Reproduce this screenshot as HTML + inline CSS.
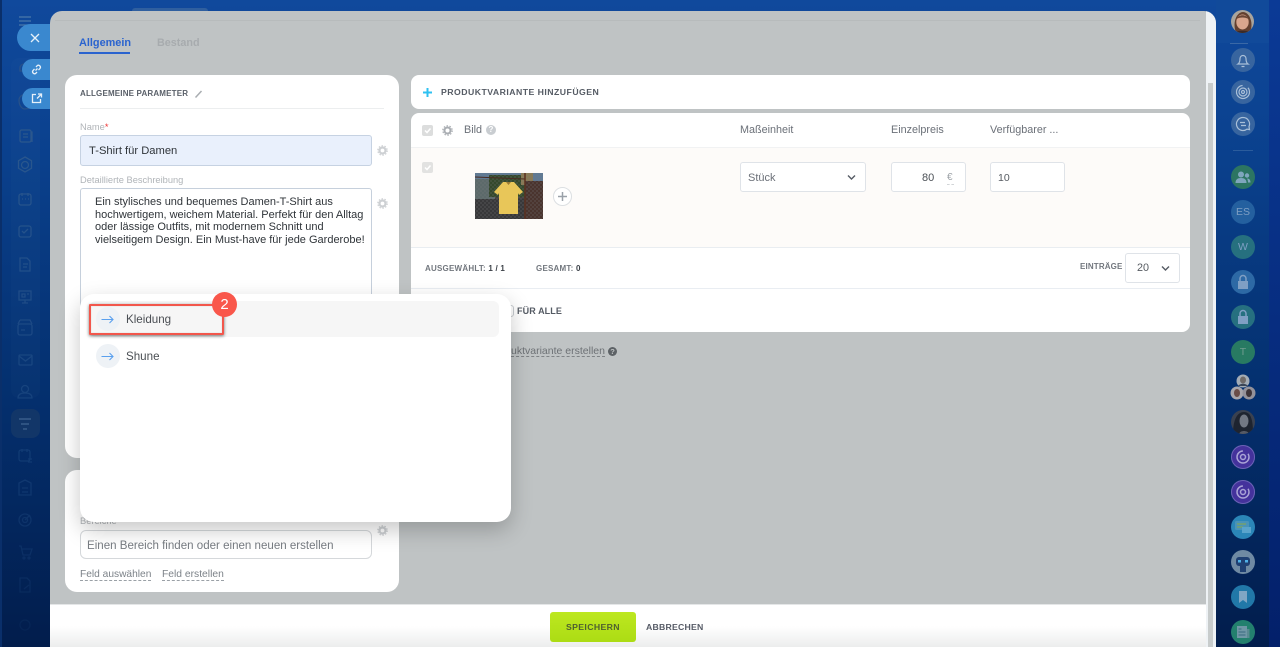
<!DOCTYPE html>
<html><head><meta charset="utf-8"><style>
*{box-sizing:border-box}
html,body{margin:0;padding:0;width:1280px;height:647px;overflow:hidden;background:#0a3a85;font-family:"Liberation Sans",sans-serif}
.a{position:absolute}
.t{position:absolute;white-space:nowrap;line-height:1}
.card{position:absolute;background:#fff}
.av{position:absolute;left:1231px;width:24px;height:24px;border-radius:50%;color:#7f9fc4;font-size:10.500px;text-align:center;line-height:24px;overflow:hidden}
.av svg{position:absolute;left:0;top:0}
.inp{position:absolute;background:#fff;border:1px solid #dfe3e8;border-radius:3px}
.dash{border-bottom:1px dashed #9aa0a6}
</style></head><body>
<div class="a" style="left:0;top:0;width:1280px;height:647px;background:linear-gradient(180deg,#10499c 0,#0b4290 20%,#04306f 60%,#021d4c 100%)"></div>
<div class="a" style="left:1269px;top:0;width:11px;height:647px;background:linear-gradient(180deg,#0b3a96,#03206a)"></div>
<div class="a" style="left:1216px;top:0;width:53px;height:43px;background:#114a9a"></div>
<div class="a" style="left:0;top:0;width:2px;height:647px;background:#0a2f6a"></div>
<div class="a" style="left:11px;top:58px;width:29px;height:340px;background:rgba(255,255,255,.015);border-radius:8px"></div>
<div class="a" style="left:11px;top:409px;width:29px;height:29px;background:#123668;border-radius:8px"></div>
<svg class="a" style="left:0;top:0;-webkit-mask-image:linear-gradient(#000 0,#000 22%,rgba(0,0,0,.45) 60%,rgba(0,0,0,.2) 90%,rgba(0,0,0,.08) 100%)" width="50" height="647" fill="none" stroke="#2b578d" stroke-width="1.300">
<path d="M19 17h12M19 21h12M19 25h12" stroke="#4a78aa"/>
<path d="M20 68a4 4 0 1 1 8 0v3h-8zM19 100c0 6 3 9 6 9l6-1v-7a6 6 0 0 0-12-1z" stroke="#28528a"/>
<rect x="20" y="130" width="11" height="12" rx="1.500"/><path d="M23 134h5M23 137h5M31 132h1v10"/>
<path d="M25 157l6.500 3.700v7.600L25 172l-6.500-3.700v-7.600z"/><circle cx="25" cy="165" r="3.500"/>
<rect x="19" y="194" width="12" height="11" rx="2"/><path d="M22 193v3M28 193v3M22 199h1M25 199h1M28 199h1"/>
<rect x="19" y="226" width="12" height="11" rx="2"/><path d="M22 231l2 2 4-4"/>
<path d="M20 258h7l3 3v10H20zM23 264h5M23 267h4"/>
<rect x="19" y="291" width="12" height="9"/><path d="M25 300v3M22 303h6M22 294h3v3h-3zM27 294h2"/>
<rect x="18" y="324" width="14" height="11" rx="2"/><path d="M20 320h10l2 4M20 320l-2 4M21 330h4"/>
<rect x="19" y="355" width="13" height="10" rx="1"/><path d="M19 356l6.500 5 6.500-5"/>
<circle cx="25" cy="389" r="3.500"/><path d="M18 398c0-4 3-5 7-5s7 1 7 5z"/>
<path d="M19 419h12M21 424h8M23 429h4" stroke="#5a7fa8" stroke-width="2"/>
<rect x="19" y="450" width="11" height="11" rx="2"/><path d="M28 459h4M28 462h4M22 449v3M27 449v3"/>
<path d="M19 487v-4l6-3 6 3v12H19zM22 488h6M22 492h6"/>
<circle cx="25" cy="520" r="6"/><circle cx="25" cy="520" r="2.500"/><path d="M25 520l5-5"/>
<path d="M19 546h2l2 9h7l2-6H22"/><circle cx="24" cy="558" r="1"/><circle cx="29" cy="558" r="1"/>
<path d="M20 578h7l3 3v11H20zM24 589l5-4"/>
<circle cx="25" cy="625" r="5"/>
</svg>

<div class="a" style="left:50px;top:11px;width:1166px;height:636px;background:#bfc3c4;border-radius:12px 12px 0 0;overflow:hidden">
 <div class="a" style="left:1156px;top:0;width:10px;height:636px;background:#eef2f5"></div>
 <div class="a" style="left:1158px;top:72px;width:5px;height:564px;background:#c8cccc"></div>
 <div class="a" style="left:5px;top:9px;width:1145px;height:1px;background:#b7bbbc"></div>
</div>
<div class="a" style="left:132px;top:8px;width:76px;height:3px;background:#2f5f9f;border-radius:6px 6px 0 0"></div>

<div class="a" style="left:17px;top:24px;width:33px;height:27px;background:#3a88cf;border-radius:14px 0 0 14px"></div>
<svg class="a" style="left:29px;top:32px" width="12" height="12" stroke="#e6f0f9" stroke-width="1.300"><path d="M2 2l8 8M10 2l-8 8"/></svg>
<div class="a" style="left:22px;top:59px;width:28px;height:21px;background:#3a88cf;border-radius:11px 0 0 11px"></div>
<svg class="a" style="left:30px;top:63px" width="13" height="13" fill="none" stroke="#e6f0f9" stroke-width="1.300"><path d="M5.500 7.500l2-2M4.500 6L3 7.500a2 2 0 0 0 2.800 2.800L7 9M8.500 7L10 5.500a2 2 0 0 0-2.800-2.800L6 4"/></svg>
<div class="a" style="left:22px;top:88px;width:28px;height:21px;background:#3a88cf;border-radius:11px 0 0 11px"></div>
<svg class="a" style="left:30px;top:92px" width="13" height="13" fill="none" stroke="#e6f0f9" stroke-width="1.300"><path d="M6 2.500H2.500v8h8V7M7 6.500l4-4M8 2h3.500v3.500"/></svg>

<div class="t" style="left:79px;top:38px;font-size:10.900px;font-weight:bold;color:#2a63cf">Allgemein</div>
<div class="a" style="left:79px;top:52px;width:51px;height:2px;background:#2a63cf"></div>
<div class="t" style="left:157px;top:38px;font-size:10.800px;font-weight:bold;color:#a7abae">Bestand</div>

<div class="card" style="left:65px;top:75px;width:334px;height:383px;border-radius:12px"></div>
<div class="t" style="left:80px;top:90px;font-size:8px;font-weight:bold;color:#5a6069;letter-spacing:.17px">ALLGEMEINE PARAMETER</div>
<svg class="a" style="left:194px;top:89px" width="10" height="10" stroke="#a9adb1" stroke-width="1.500"><path d="M1.500 8.500l6-6.500"/></svg>
<div class="a" style="left:80px;top:108px;width:304px;height:1px;background:#eceeef"></div>
<div class="t" style="left:80px;top:123px;font-size:9.300px;color:#b0b4b8">Name<span style="color:#e33">*</span></div>
<div class="a" style="left:80px;top:135px;width:292px;height:31px;background:#e9f0fc;border:1px solid #c6d2e2;border-radius:3px"></div>
<div class="t" style="left:89px;top:146px;font-size:11.200px;color:#2f3439">T-Shirt für Damen</div>
<svg class="a" style="left:377px;top:145px" width="11" height="11"><circle cx="5.500" cy="5.500" r="3" fill="none" stroke="#cdd0d3" stroke-width="2.200"/><circle cx="5.500" cy="5.500" r="4.700" fill="none" stroke="#cdd0d3" stroke-width="1.200" stroke-dasharray="1.500 1.500"/></svg>
<div class="t" style="left:80px;top:176px;font-size:9.300px;color:#b0b4b8">Detaillierte Beschreibung</div>
<div class="a" style="left:80px;top:188px;width:292px;height:120px;background:#fff;border:1px solid #c6d0dc;border-radius:3px"></div>
<div class="t" style="left:95px;top:196px;font-size:11px;line-height:12.700px;color:#2f3439;white-space:pre">Ein stylisches und bequemes Damen-T-Shirt aus
hochwertigem, weichem Material. Perfekt für den Alltag
oder lässige Outfits, mit modernem Schnitt und
vielseitigem Design. Ein Must-have für jede Garderobe!</div>
<svg class="a" style="left:377px;top:198px" width="11" height="11"><circle cx="5.500" cy="5.500" r="3" fill="none" stroke="#cdd0d3" stroke-width="2.200"/><circle cx="5.500" cy="5.500" r="4.700" fill="none" stroke="#cdd0d3" stroke-width="1.200" stroke-dasharray="1.500 1.500"/></svg>

<div class="card" style="left:65px;top:470px;width:334px;height:122px;border-radius:12px"></div>
<div class="t" style="left:80px;top:517px;font-size:9.300px;color:#b0b4b8">Bereiche</div>
<div class="a" style="left:80px;top:530px;width:292px;height:29px;background:#fff;border:1px solid #d5d8db;border-radius:6px"></div>
<div class="t" style="left:87px;top:541px;font-size:11.550px;color:#777c82">Einen Bereich finden oder einen neuen erstellen</div>
<svg class="a" style="left:377px;top:525px" width="11" height="11"><circle cx="5.500" cy="5.500" r="3" fill="none" stroke="#cdd0d3" stroke-width="2.200"/><circle cx="5.500" cy="5.500" r="4.700" fill="none" stroke="#cdd0d3" stroke-width="1.200" stroke-dasharray="1.500 1.500"/></svg>
<div class="t dash" style="left:80px;top:570px;height:11px;font-size:10.200px;color:#7c8288">Feld auswählen</div>
<div class="t dash" style="left:162px;top:570px;height:11px;font-size:10.300px;color:#7c8288">Feld erstellen</div>

<div class="card" style="left:411px;top:75px;width:779px;height:34px;border-radius:8px"></div>
<svg class="a" style="left:423px;top:88px" width="9" height="9" stroke="#2fc1f1" stroke-width="2"><path d="M4.500 0v9M0 4.500h9"/></svg>
<div class="t" style="left:441px;top:88px;font-size:8.700px;font-weight:bold;color:#555b64;letter-spacing:.47px">PRODUKTVARIANTE HINZUFÜGEN</div>

<div class="card" style="left:411px;top:113px;width:779px;height:219px;border-radius:8px;overflow:hidden">
 <div class="a" style="left:0;top:34px;width:779px;height:101px;background:#fdfbf9;border-top:1px solid #f1f2f3;border-bottom:1px solid #e9edf1"></div>
 <div class="a" style="left:0;top:175px;width:779px;height:1px;background:#e9edf2"></div>
</div>
<div class="a" style="left:422px;top:125px;width:11px;height:11px;background:#dcdddd;border-radius:2px"></div>
<svg class="a" style="left:422px;top:125px" width="11" height="11" fill="none" stroke="#fff" stroke-width="1.500"><path d="M3 5.500l2 2 3.500-4"/></svg>
<svg class="a" style="left:442px;top:125px" width="11" height="11"><circle cx="5.500" cy="5.500" r="3" fill="none" stroke="#a9adb2" stroke-width="2"/><circle cx="5.500" cy="5.500" r="4.700" fill="none" stroke="#a9adb2" stroke-width="1.200" stroke-dasharray="1.500 1.500"/></svg>
<div class="t" style="left:464px;top:125px;font-size:10.800px;color:#6b7078">Bild</div>
<div class="t" style="left:486px;top:125px;width:10px;height:10px;border-radius:50%;background:#c9cdd1;color:#fff;font-size:8px;line-height:10px;text-align:center;font-weight:bold">?</div>
<div class="t" style="left:740px;top:125px;font-size:10.800px;color:#6b7078">Maßeinheit</div>
<div class="t" style="left:891px;top:125px;font-size:10.800px;color:#6b7078">Einzelpreis</div>
<div class="t" style="left:990px;top:125px;font-size:10.800px;color:#6b7078">Verfügbarer ...</div>
<div class="a" style="left:422px;top:162px;width:11px;height:11px;background:#e2e2e1;border-radius:2px"></div>
<svg class="a" style="left:422px;top:162px" width="11" height="11" fill="none" stroke="#fff" stroke-width="1.500"><path d="M3 5.500l2 2 3.500-4"/></svg>

<svg class="a" style="left:475px;top:173px" width="68" height="46" viewBox="0 0 68 46">
<defs><pattern id="m" width="4" height="4" patternUnits="userSpaceOnUse"><path d="M0 0l4 4M4 0L0 4" stroke="#77777a" stroke-width=".4" opacity=".5"/></pattern></defs>
<rect width="68" height="46" fill="#43403f"/>
<rect width="68" height="9" fill="#5f7a96"/>
<rect x="0" y="6" width="20" height="20" fill="#5c6a6a"/>
<rect x="14" y="2" width="36" height="22" fill="#34492c"/>
<rect x="46" y="0" width="12" height="12" fill="#8a7a55"/>
<rect x="50" y="8" width="18" height="38" fill="#4a342e"/>
<rect y="26" width="50" height="20" fill="#38383a"/>
<rect width="68" height="46" fill="url(#m)"/>
<path d="M0 4l50 2" stroke="#4a2c22"/><path d="M50 0v46" stroke="#5a3020" stroke-width="1.500"/>
<path d="M28 9l11 0 9 10-4 3-1-2v21H24V20l-1 2-4-3z" fill="#e8c659"/>
<path d="M31 9h5l-2.500 3z" fill="#9a7a35"/>
</svg>
<div class="a" style="left:553px;top:187px;width:19px;height:19px;border-radius:50%;background:#fff;border:1px solid #dcdfe2"></div>
<svg class="a" style="left:557px;top:191px" width="11" height="11" stroke="#9aa1a9" stroke-width="1.500"><path d="M5.500 1v9M1 5.500h9"/></svg>

<div class="inp" style="left:740px;top:162px;width:126px;height:30px"></div>
<div class="t" style="left:748px;top:173px;font-size:11px;color:#6b7078">Stück</div>
<svg class="a" style="left:847px;top:174px" width="9" height="7" fill="none" stroke="#555b64" stroke-width="1.400"><path d="M1 1.500l3.500 3.500L8 1.500"/></svg>
<div class="inp" style="left:891px;top:162px;width:75px;height:30px"></div>
<div class="t" style="left:922px;top:173px;font-size:11px;color:#4c5157">80</div>
<div class="t" style="left:947px;top:173px;font-size:10px;color:#9ea3a8">€</div>
<div class="a" style="left:947px;top:184px;width:7px;border-top:1px dashed #d2d5d8"></div>
<div class="inp" style="left:990px;top:162px;width:75px;height:30px"></div>
<div class="t" style="left:998px;top:173px;font-size:10.500px;color:#565b61">10</div>

<div class="t" style="left:425px;top:265px;font-size:8px;color:#72777e;letter-spacing:.22px;font-weight:bold">AUSGEWÄHLT: <span style="color:#3b4047">1 / 1</span></div>
<div class="t" style="left:536px;top:265px;font-size:8px;color:#72777e;letter-spacing:.22px;font-weight:bold">GESAMT: <span style="color:#3b4047">0</span></div>
<div class="t" style="left:1080px;top:263px;font-size:8px;color:#72777e;font-weight:bold;letter-spacing:.15px">EINTRÄGE</div>
<div class="inp" style="left:1125px;top:253px;width:55px;height:30px"></div>
<div class="t" style="left:1137px;top:263px;font-size:10.800px;color:#565b61">20</div>
<svg class="a" style="left:1161px;top:265px" width="9" height="7" fill="none" stroke="#555b64" stroke-width="1.400"><path d="M1 1.500l3.500 3.500L8 1.500"/></svg>
<div class="a" style="left:505px;top:305px;width:9px;height:12px;border:1px solid #c8ccd0;border-radius:3px"></div>
<div class="t" style="left:517px;top:307px;font-size:9px;font-weight:bold;color:#555b64;letter-spacing:.1px">FÜR ALLE</div>

<div class="t" style="left:511px;top:346px;height:11px;font-size:10.500px;color:#6d7175;border-bottom:1px dashed #7f8386">uktvariante erstellen</div>
<div class="t" style="left:608px;top:347px;width:9px;height:9px;border-radius:50%;background:#5d6266;color:#bfc3c4;font-size:7.500px;line-height:9px;text-align:center;font-weight:bold">?</div>

<div class="a" style="left:50px;top:604px;width:1156px;height:43px;background:linear-gradient(180deg,#fff 0,#fff 50%,#eceded 100%);border-top:1px solid #e4e6e7"></div>
<div class="a" style="left:550px;top:612px;width:86px;height:30px;background:linear-gradient(180deg,#bde820,#acdc14);border-radius:3px"></div>
<div class="t" style="left:566px;top:623px;font-size:8.700px;font-weight:bold;color:#4f6030;letter-spacing:.35px">SPEICHERN</div>
<div class="t" style="left:646px;top:623px;font-size:8.700px;font-weight:bold;color:#565b66;letter-spacing:.22px">ABBRECHEN</div>

<div class="a" style="left:80px;top:294px;width:431px;height:228px;background:#fff;border-radius:14px;box-shadow:0 8px 22px rgba(0,0,0,.22)"></div>
<div class="a" style="left:90px;top:301px;width:409px;height:36px;background:#f6f6f6;border-radius:6px"></div>
<div class="a" style="left:96px;top:307px;width:24px;height:24px;border-radius:50%;background:#eef2f6"></div>
<svg class="a" style="left:101px;top:315px" width="13" height="9" fill="none" stroke="#5aa0ee" stroke-width="1.100"><path d="M.500 4.500h11.500M8.500 1L12 4.500 8.500 8"/></svg>
<div class="t" style="left:126px;top:314px;font-size:11.600px;color:#4b4f54">Kleidung</div>
<div class="a" style="left:96px;top:344px;width:24px;height:24px;border-radius:50%;background:#eef2f6"></div>
<svg class="a" style="left:101px;top:352px" width="13" height="9" fill="none" stroke="#5aa0ee" stroke-width="1.100"><path d="M.500 4.500h11.500M8.500 1L12 4.500 8.500 8"/></svg>
<div class="t" style="left:126px;top:351px;font-size:11.600px;color:#4b4f54">Shune</div>
<div class="a" style="left:89px;top:304px;width:135px;height:31px;border:2px solid #f2574c;border-radius:1px;box-shadow:0 1px 3px rgba(0,0,0,.55),inset 0 0 1px rgba(0,0,0,.2)"></div>
<div class="a" style="left:212px;top:292px;width:25px;height:25px;border-radius:50%;background:#f9574b;color:#fff;font-size:15px;line-height:25px;text-align:center">2</div>

<div class="av" style="left:1231px;top:10px;width:23px;height:23px;background:#a9a49c"><svg width="23" height="23"><ellipse cx="12" cy="15" rx="8.500" ry="13" fill="#63402f"/><ellipse cx="11.500" cy="12" rx="6.200" ry="7.500" fill="#d9a68d"/><path d="M5.500 9c2-5 10-5 12 0-3-2-9-2-12 0z" fill="#6a4636"/><path d="M3 23c2-3 15-3 17 0z" fill="#3a2a28"/></svg></div>
<div class="a" style="left:1230px;top:43px;width:18px;height:1px;background:#3a68a6"></div>
<div class="a" style="left:1233px;top:150px;width:20px;height:1px;background:#2b5c9c"></div>

<div class="av" style="top:48px;background:#38659f"><svg width="24" height="24" fill="none" stroke="#a9bfd8" stroke-width="1.200"><path d="M7 16c1.500-1 2-3 2-5.500a3 3 0 0 1 6 0c0 2.500.5 4.500 2 5.500zM10.500 18.500h3"/></svg></div>
<div class="av" style="top:80px;background:#38659f"><svg width="24" height="24" fill="none" stroke="#a9bfd8" stroke-width="1.200"><circle cx="12" cy="12" r="6.500" stroke-dasharray="30 6"/><circle cx="12" cy="12" r="4"/><circle cx="12" cy="12" r="1.500"/></svg></div>
<div class="av" style="top:112px;background:#38659f"><svg width="24" height="24" fill="none" stroke="#a9bfd8" stroke-width="1.200"><path d="M12 5.500a6.500 6.500 0 1 0 4 11.600l2.500.5-.5-3A6.500 6.500 0 0 0 12 5.500zM9 10.500h5M15 13.500h-5"/></svg></div>

<div class="av" style="top:165px;background:#2c7562"><svg width="24" height="24" fill="#7fa6bd"><circle cx="10" cy="9.500" r="3"/><path d="M4.500 18c0-3.500 2-5 5.500-5s5.500 1.500 5.500 5z"/><circle cx="16" cy="10.500" r="2.200"/><path d="M16 13.500c2.500 0 3.500 1.500 3.500 4H17c0-2-.5-3-1-4z"/></svg></div>
<div class="av" style="top:200px;background:#24609f">ES</div>
<div class="av" style="top:235px;background:#26707f">W</div>
<div class="av" style="top:270px;background:#2d69a5"><svg width="24" height="24"><rect x="7" y="11" width="10" height="8" fill="#7f9fc4"/><path d="M9 11V8.500a3 3 0 0 1 6 0V11" fill="none" stroke="#7f9fc4" stroke-width="1.500"/></svg></div>
<div class="av" style="top:305px;background:#267080"><svg width="24" height="24"><rect x="7" y="11" width="10" height="8" fill="#7f9fc4"/><path d="M9 11V8.500a3 3 0 0 1 6 0V11" fill="none" stroke="#7f9fc4" stroke-width="1.500"/></svg></div>
<div class="av" style="top:340px;background:#287a62;color:#6f9c8f">T</div>

<svg class="a" style="left:1230px;top:374px" width="26" height="26">
<circle cx="13" cy="7" r="6.500" fill="#a3acb6"/><ellipse cx="13" cy="6" rx="3" ry="3.500" fill="#6f6a68"/><path d="M8 12c2-3 8-3 10 0z" fill="#3a4658"/>
<circle cx="7" cy="19" r="6.500" fill="#a8a6ac"/><ellipse cx="7" cy="19" rx="3" ry="4" fill="#6a4d48"/>
<circle cx="19" cy="19" r="6.500" fill="#94929a"/><ellipse cx="19" cy="19" rx="3" ry="4" fill="#3e3438"/>
</svg>
<div class="av" style="top:410px;background:#3a4150"><svg width="24" height="24"><path d="M2 24c0-14 4-22 11-22s9 8 9 22z" fill="#1e2430"/><ellipse cx="13" cy="11" rx="4.500" ry="6.500" fill="#727884"/><path d="M8 24c1-4 9-4 10 0z" fill="#555a66"/></svg></div>
<div class="av" style="top:445px;background:#44329c;box-shadow:inset 0 0 0 1px #6a63b5"><svg width="24" height="24" fill="none" stroke="#a9a3d6" stroke-width="1.500"><circle cx="12" cy="12" r="6" stroke-dasharray="28 6"/><circle cx="12" cy="12" r="2.500"/></svg></div>
<div class="av" style="top:480px;background:#44329c;box-shadow:inset 0 0 0 1px #6a63b5"><svg width="24" height="24" fill="none" stroke="#a9a3d6" stroke-width="1.500"><circle cx="12" cy="12" r="6" stroke-dasharray="28 6"/><circle cx="12" cy="12" r="2.500"/></svg></div>
<div class="av" style="top:515px;background:#2b86b8"><svg width="24" height="24"><rect x="4" y="6" width="14" height="9" rx="1.500" fill="#4a93b8"/><path d="M6 9h9" stroke="#7ea35f" stroke-width="1.300"/><path d="M6 12h6" stroke="#7ea35f" stroke-width="1.300"/><rect x="11" y="12" width="9" height="6" fill="#5aa4cc"/></svg></div>
<div class="av" style="top:550px;background:#6f8aa3"><svg width="24" height="24"><rect x="5" y="7" width="14" height="9" rx="3" fill="#1e3f72"/><rect x="7" y="10" width="3" height="2.500" fill="#4fb0e6"/><rect x="14" y="10" width="3" height="2.500" fill="#4fb0e6"/><rect x="9" y="16" width="6" height="6" fill="#1e3f72"/></svg></div>
<div class="av" style="top:585px;background:#2178a8"><svg width="24" height="24"><path d="M8 6h8v12l-4-3-4 3z" fill="#7fa6c4"/></svg></div>
<div class="av" style="top:620px;background:#23806e"><svg width="24" height="24"><rect x="6" y="6" width="10" height="12" fill="#6f97a6"/><rect x="16" y="9" width="2.500" height="9" fill="#5a8a92"/><path d="M7.500 9h3M7.500 12h7M7.500 15h7" stroke="#3a6a80"/></svg></div>
</body></html>
